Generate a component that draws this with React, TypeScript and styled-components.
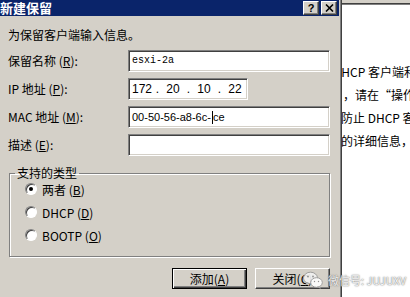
import React from "react";
import styled, { createGlobalStyle } from "styled-components";

const GlobalStyle = createGlobalStyle`
  html, body { margin: 0; padding: 0; background: #ffffff; }
  body { font-family: "Noto Sans CJK SC", "Liberation Sans", sans-serif; font-size: 12px; color: #000; }
`;

const Screen = styled.div`
  position: relative;
  width: 410px;
  height: 297px;
  display: flex;
  overflow: hidden;
  background: #ffffff;
`;

const Dialog = styled.div`
  width: 341px;
  height: 297px;
  flex: none;
  display: flex;
  flex-direction: column;
  background: #d4d0c8;
  border-right: 1px solid #404040;
  box-shadow: inset -1px 0 #808080;
`;

const TitleBar = styled.div`
  height: 16px;
  margin-right: 2px;
  display: flex;
  align-items: center;
  justify-content: space-between;
  background: #0a246a;
  padding-right: 2px;
`;

const Title = styled.div`
  color: #ffffff;
  font-weight: bold;
  font-size: 13px;
  line-height: 16px;
  margin-left: 0;
`;

const TitleButtons = styled.div`
  display: flex;
  gap: 2px;
  align-self: flex-start;
  margin-top: 1px;
`;

const CaptionButton = styled.div`
  width: 16px;
  height: 14px;
  box-sizing: border-box;
  background: #d4d0c8;
  border: 1px solid;
  border-color: #ffffff #404040 #404040 #ffffff;
  box-shadow: inset -1px -1px #808080;
  display: flex;
  align-items: center;
  justify-content: center;
  font-family: "Liberation Sans", sans-serif;
  font-weight: bold;
  font-size: 11px;
  line-height: 12px;
`;

const Body = styled.div`
  flex: 1;
  display: flex;
  flex-direction: column;
  padding: 0 11px 0 8px;
`;

const Intro = styled.div`
  margin-top: 11px;
  line-height: 16px;
  font-size: 12px;
`;

const Form = styled.div`
  margin-top: 7px;
  display: grid;
  grid-template-columns: 120px 1fr;
  grid-auto-rows: 22px;
  row-gap: 6px;
  align-items: center;
`;

const Label = styled.div`
  font-size: 12px;
  line-height: 16px;
  white-space: nowrap;
`;

const Field = styled.div<{ $width?: number }>`
  height: 22px;
  box-sizing: border-box;
  width: ${(p) => (p.$width ? `${p.$width}px` : "100%")};
  background: #ffffff;
  border: 1px solid;
  border-color: #808080 #ffffff #ffffff #808080;
  box-shadow: inset 1px 1px #404040, inset -1px -1px #d4d0c8;
  display: flex;
  align-items: center;
  padding-left: 3px;
  white-space: nowrap;
  overflow: hidden;
`;

const MonoValue = styled.span`
  font-family: "Liberation Mono", monospace;
  font-size: 10px;
  line-height: 14px;
`;

const SansValue = styled.span`
  font-family: "Liberation Sans", sans-serif;
  font-size: 11px;
  line-height: 14px;
  display: flex;
  align-items: center;
`;

const Caret = styled.span`
  display: inline-block;
  width: 1px;
  height: 13px;
  background: #000;
  margin: 0 0 0 1px;
`;

const IpRow = styled.div`
  display: flex;
  align-items: center;
  font-family: "Liberation Sans", sans-serif;
  font-size: 12px;
  line-height: 14px;
`;

const Octet = styled.span`
  width: 20px;
  text-align: center;
`;

const Dot = styled.span`
  width: 11px;
  text-align: center;
`;

const Group = styled.fieldset`
  margin: 9px 0 0 1px;
  padding: 0 0 13px 5px;
  border: 1px solid #808080;
  box-shadow: 1px 1px #ffffff, inset 1px 1px #ffffff;
  display: flex;
  flex-direction: column;
  gap: 7px;
  min-width: 0;
`;

const Legend = styled.legend`
  padding: 0 2px;
  font-size: 12px;
  line-height: 16px;
`;

const RadioRow = styled.div`
  display: flex;
  align-items: center;
  height: 16px;
  padding-left: 10px;
  gap: 5px;
`;

const RadioCircle = styled.span<{ $checked?: boolean }>`
  position: relative;
  width: 12px;
  height: 12px;
  box-sizing: border-box;
  border-radius: 50%;
  background: #ffffff;
  border: 1px solid;
  border-color: #808080 #ffffff #ffffff #808080;
  box-shadow: inset 1px 1px #404040;
  &::after {
    content: "";
    display: ${(p) => (p.$checked ? "block" : "none")};
    position: absolute;
    left: 3px;
    top: 3px;
    width: 4px;
    height: 4px;
    border-radius: 50%;
    background: #000;
  }
`;

const Buttons = styled.div`
  margin-top: 11px;
  display: flex;
  justify-content: flex-end;
  gap: 8px;
`;

const PushButton = styled.div<{ $default?: boolean }>`
  width: 75px;
  height: 21px;
  box-sizing: border-box;
  background: #d4d0c8;
  display: flex;
  align-items: center;
  justify-content: center;
  font-size: 12px;
  line-height: 14px;
  border: 1px solid;
  border-color: ${(p) => (p.$default ? "#000000" : "#ffffff #404040 #404040 #ffffff")};
  box-shadow: ${(p) =>
    p.$default
      ? "inset 1px 1px #ffffff, inset -1px -1px #404040, inset -2px -2px #808080"
      : "inset -1px -1px #808080"};
`;

const BackWindow = styled.div`
  flex: 1;
  min-width: 0;
  overflow: hidden;
  display: flex;
  flex-direction: column;
  background: #ffffff;
`;

const BackTop = styled.div`
  height: 3px;
  background: #d4d0c8;
  border-bottom: 1px solid #404040;
  box-shadow: 0 1px #808080;
`;

const BackText = styled.div`
  margin-top: 56px;
  display: flex;
  flex-direction: column;
`;

const BackLine = styled.div<{ $shift: number }>`
  line-height: 23px;
  font-size: 12px;
  white-space: nowrap;
  margin-left: ${(p) => p.$shift}px;
`;

const Watermark = styled.div`
  position: absolute;
  left: 303px;
  top: 271px;
  display: flex;
  align-items: center;
  gap: 5px;
  color: #f4f4f4;
  font-size: 11px;
  line-height: 14px;
  text-shadow: 0 0 1px #666, 0 0 2px #888;
  opacity: 0.9;
`;

const WechatIcon = () => (
  <svg width="20" height="18" viewBox="0 0 20 18">
    <ellipse cx="7.5" cy="7" rx="7" ry="5.8" fill="#f2f2f2" stroke="#9a9a9a" strokeWidth="1" />
    <path d="M3.5 11.5 L2.5 14 L6 12.3 Z" fill="#f2f2f2" stroke="#9a9a9a" strokeWidth="0.8" />
    <ellipse cx="13.5" cy="11.5" rx="5.8" ry="4.8" fill="#ffffff" stroke="#9a9a9a" strokeWidth="1" />
    <path d="M16.5 15.3 L17.5 17.3 L14.5 16 Z" fill="#ffffff" stroke="#9a9a9a" strokeWidth="0.8" />
    <circle cx="5" cy="5.5" r="0.9" fill="#8a8a8a" />
    <circle cx="10" cy="5.5" r="0.9" fill="#8a8a8a" />
    <circle cx="11.5" cy="10.5" r="0.7" fill="#8a8a8a" />
    <circle cx="15.5" cy="10.5" r="0.7" fill="#8a8a8a" />
  </svg>
);

const CloseGlyph = () => (
  <svg width="9" height="8" viewBox="0 0 9 8">
    <path d="M1 0.5 L8 7.5 M8 0.5 L1 7.5" stroke="#000" strokeWidth="1.6" />
  </svg>
);

export default function App() {
  return (
    <>
      <GlobalStyle />
      <Screen>
        <Dialog>
          <TitleBar>
            <Title>新建保留</Title>
            <TitleButtons>
              <CaptionButton>?</CaptionButton>
              <CaptionButton>
                <CloseGlyph />
              </CaptionButton>
            </TitleButtons>
          </TitleBar>
          <Body>
            <Intro>为保留客户端输入信息。</Intro>
            <Form>
              <Label>
                保留名称 (<u>R</u>):
              </Label>
              <Field>
                <MonoValue>esxi-2a</MonoValue>
              </Field>
              <Label>
                IP 地址 (<u>P</u>):
              </Label>
              <Field $width={120}>
                <IpRow>
                  <Octet>172</Octet>
                  <Dot>.</Dot>
                  <Octet>20</Octet>
                  <Dot>.</Dot>
                  <Octet>10</Octet>
                  <Dot>.</Dot>
                  <Octet>22</Octet>
                </IpRow>
              </Field>
              <Label>
                MAC 地址 (<u>M</u>):
              </Label>
              <Field>
                <SansValue>
                  00-50-56-a8-6c-
                  <Caret />
                  ce
                </SansValue>
              </Field>
              <Label>
                描述 (<u>E</u>):
              </Label>
              <Field />
            </Form>
            <Group>
              <Legend>支持的类型</Legend>
              <RadioRow>
                <RadioCircle $checked />
                <span>
                  两者 (<u>B</u>)
                </span>
              </RadioRow>
              <RadioRow>
                <RadioCircle />
                <span>
                  DHCP (<u>D</u>)
                </span>
              </RadioRow>
              <RadioRow>
                <RadioCircle />
                <span>
                  BOOTP (<u>O</u>)
                </span>
              </RadioRow>
            </Group>
            <Buttons>
              <PushButton $default>
                添加(<u>A</u>)
              </PushButton>
              <PushButton>
                关闭(<u>C</u>)
              </PushButton>
            </Buttons>
          </Body>
        </Dialog>
        <BackWindow>
          <BackTop />
          <BackText>
            <BackLine $shift={-9}>DHCP 客户端和服务器</BackLine>
            <BackLine $shift={1}>，请在“操作”菜单</BackLine>
            <BackLine $shift={-1}>防止 DHCP 客户端</BackLine>
            <BackLine $shift={-1}>的详细信息，</BackLine>
          </BackText>
        </BackWindow>
        <Watermark>
          <WechatIcon />
          <span>微信号: JUJUXV</span>
        </Watermark>
      </Screen>
    </>
  );
}
